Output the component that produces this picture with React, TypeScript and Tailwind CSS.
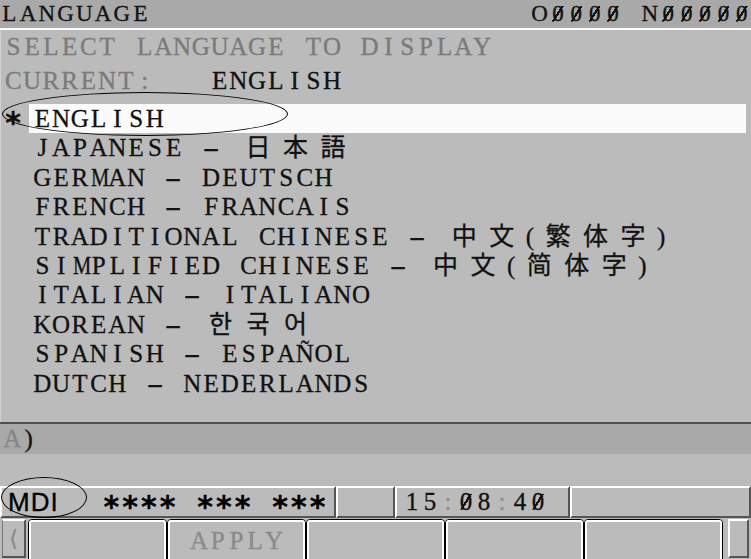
import React from "react";

// 40-column CNC screen: every character sits in a fixed cell
const SERIF = "font-['Liberation_Serif','Noto_Sans_CJK_JP','Noto_Sans_CJK_SC','Noto_Sans_CJK_KR',serif]";

const LANGS = [
  "JAPANESE - 日本語",
  "GERMAN - DEUTSCH",
  "FRENCH - FRANCAIS",
  "TRADITIONAL CHINESE - 中文(繁体字)",
  "SIMPLIFIED CHINESE - 中文(简体字)",
  "ITALIAN - ITALIANO",
  "KOREAN - 한국어",
  "SPANISH - ESPAÑOL",
  "DUTCH - NEDERLANDS",
];

type CellsProps = {
  text: string;
  cell?: string;
  wide?: string;
  slash?: boolean;
  className?: string;
};

function Cells({ text, cell = "w-[18.75px]", wide = "w-[37.5px]", slash = false, className = "" }: CellsProps) {
  return (
    <span className={`inline-flex ${className}`}>
      {Array.from(text).map((ch, i) => {
        const isWide = /[\u3040-\u9fff\uac00-\ud7af]/.test(ch);
        let glyph: React.ReactNode = ch;
        if (ch === " ") glyph = "\u00a0";
        if (ch === "-") glyph = <span className="inline-block scale-x-[2]">-</span>;
        if (ch === "M" || ch === "W") glyph = <span className="inline-block scale-x-[0.82]">{ch}</span>;
        if (ch === "*")
          glyph = (
            <span className="inline-block translate-y-[4px] font-['DejaVu_Sans',sans-serif] text-[30px] font-bold leading-none">*</span>
          );
        // slashed zero of the CNC character set
        if (slash && ch === "0")
          glyph = (
            <span className="inline-block bg-[linear-gradient(122deg,transparent_44%,#111_44%,#111_56%,transparent_56%)] bg-[length:100%_56%] bg-center bg-no-repeat">
              0
            </span>
          );
        return (
          <span key={i} className={`relative inline-block shrink-0 text-center ${isWide ? wide : cell}`}>
            {glyph}
          </span>
        );
      })}
    </span>
  );
}

function SoftKey({ label }: { label?: string }) {
  return (
    <div className="h-full rounded-[4px] border border-black">
      <div className="flex h-full items-center justify-center rounded-[3px] border-2 border-white text-[25px] text-[#8a8a8a]">
        {label && <Cells text={label} />}
      </div>
    </div>
  );
}

export default function App() {
  return (
    <div
      className={`relative flex h-[559px] w-[751px] flex-col overflow-hidden bg-[#bbbbbb] text-[#111] [-webkit-text-stroke:0.3px] ${SERIF}`}
    >
      {/* title bar */}
      <div className="flex h-[28px] items-center justify-between bg-[#a9a9a9] text-[23px] leading-[28px]">
        <Cells text="LANGUAGE" />
        <Cells text="O0000 N00000" cell="w-[18.4px]" slash />
      </div>
      <div className="h-[2px] bg-white" />

      {/* main panel */}
      <div className="h-[392px] border-l border-[#d2d2d2] pt-[2px] text-[25px]">
        <div className="h-[30px] pl-[3px] leading-[30px] text-[#7a7a7a]">
          <Cells text="SELECT LANGUAGE TO DISPLAY" />
        </div>
        <div className="mt-[4px] flex h-[30px] pl-[3px] leading-[30px]">
          <Cells text="CURRENT:" className="text-[#7a7a7a]" />
          <Cells text="   ENGLISH" />
        </div>
        <div className="mt-[8px] flex h-[29.4px] leading-[29.4px]">
          <span className="w-[28px] pl-[3px]">
            <Cells text="*" cell="w-[18px]" />
          </span>
          <div className="mr-[5px] flex-1 bg-[#fbfbfb] pl-[4px]">
            <Cells text="ENGLISH" />
          </div>
        </div>
        {LANGS.map((l) => (
          <div key={l} className="h-[29.4px] pl-[32px] leading-[29.4px]">
            <Cells text={l} />
          </div>
        ))}
      </div>

      {/* key-in line */}
      <div className="h-[2px] bg-[#505050]" />
      <div className="flex h-[30px] items-center bg-[#a9a9a9] pl-[3px] text-[25px]">
        <Cells text="A" className="text-[#858585]" />
        <Cells text=")" cell="w-[14px]" />
      </div>
      <div className="h-[32px]" />

      {/* status bar */}
      <div className="flex h-[32px] text-[25px] leading-[28px]">
        <div className="flex w-[336px] border-2 border-b-[#555] border-l-white border-r-[#555] border-t-white">
          <span className="ml-[6px] w-[94px] font-['Liberation_Sans',sans-serif] text-[26px] tracking-[1px] text-black">MDI</span>
          <Cells text="**** *** ***" className="text-black" />
        </div>
        <div className="w-[59px] border-2 border-b-[#555] border-l-white border-r-[#555] border-t-white" />
        <div className="flex w-[175px] border-2 border-b-[#555] border-l-white border-r-[#555] border-t-white pl-[6px]">
          <span className="inline-flex">
            <Cells text="15" cell="w-[18px]" />
            <Cells text=":" cell="w-[18px]" className="text-[#8c8c8c]" />
            <Cells text="08" cell="w-[18px]" slash />
            <Cells text=":" cell="w-[18px]" className="text-[#8c8c8c]" />
            <Cells text="40" cell="w-[18px]" slash />
          </span>
        </div>
        <div className="flex-1 border-2 border-b-[#555] border-l-white border-r-[#555] border-t-white" />
      </div>

      {/* soft keys */}
      <div className="flex h-[41px] items-stretch py-[1px]">
        <div className="ml-[2px] flex w-[24px] items-center justify-center border-b-2 border-l border-r-2 border-t-2 border-b-[#555] border-l-[#777] border-r-[#555] border-t-white font-['DejaVu_Sans',sans-serif] text-[22px] text-[#8a8a8a]">
          ⟨
        </div>
        <div className="ml-[2px] grid w-[695px] grid-cols-5">
          <SoftKey />
          <SoftKey label="APPLY" />
          <SoftKey />
          <SoftKey />
          <SoftKey />
        </div>
        <div className="ml-[5px] w-[21px] border-2 border-b-[#555] border-l-white border-r-[#555] border-t-white" />
      </div>

      {/* hand-drawn annotation rings */}
      <div className="pointer-events-none absolute left-[2px] top-[92px] h-[44px] w-[286px] rounded-[50%] border border-black" />
      <div className="pointer-events-none absolute left-[1px] top-[477px] h-[41px] w-[86px] rounded-[50%] border border-black" />
    </div>
  );
}
